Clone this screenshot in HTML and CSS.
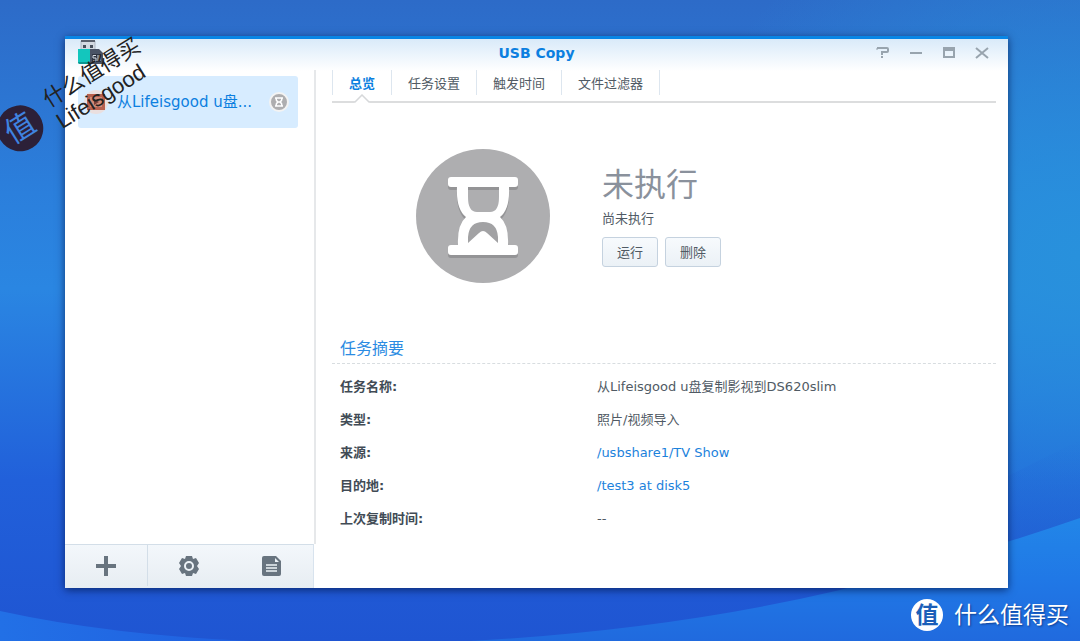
FILE: index.html
```html
<!DOCTYPE html>
<html lang="zh-CN">
<head>
<meta charset="utf-8">
<title>USB Copy</title>
<link rel="stylesheet" href="styles.css">
</head>
<body>
<div class="desktop">
  <svg class="wallpaper" viewBox="0 0 1080 641" preserveAspectRatio="none" aria-hidden="true">
    <defs>
      <linearGradient id="wave-left" x1="0" y1="0" x2="1" y2="0">
        <stop offset="0" stop-color="#2270e6"/>
        <stop offset="1" stop-color="#2060e0"/>
      </linearGradient>
      <linearGradient id="wave-right" x1="0" y1="0" x2="0" y2="1">
        <stop offset="0" stop-color="#2286e8"/>
        <stop offset="0.5" stop-color="#2078e6"/>
        <stop offset="1" stop-color="#206ade"/>
      </linearGradient>
      <linearGradient id="wave-shade" x1="0" y1="0" x2="0" y2="1">
        <stop offset="0" stop-color="#2268d6" stop-opacity="0"/>
        <stop offset="1" stop-color="#2058d2"/>
      </linearGradient>
    </defs>
    <path d="M840 560L1080 440V530L840 600Z" fill="url(#wave-shade)"/>
    <path d="M0 611Q110 635 250 641H0Z" fill="url(#wave-left)"/>
    <path d="M470 641Q670 630 840 590Q970 556 1080 518V641Z" fill="url(#wave-right)"/>
  </svg>

  <main class="window">
    <header class="titlebar">
      <svg class="app-icon" viewBox="0 0 32 26" aria-hidden="true">
        <path d="M3 1h14v10H3z" fill="#d3dae2" stroke="#aeb8c4"/>
        <path d="M3 0h14v2H3z" fill="#59616e"/>
        <path d="M5 5h3v3H5zM12 5h3v3h-3z" fill="#47505c"/>
        <path d="M0 9h12v15H2q-2 0-2-2z" fill="#13c6bd"/>
        <path d="M12 9h9l4 4v11H12z" fill="#4a5365"/>
        <path d="M0 22h12v2H2q-2 0-2-2z" fill="#0b9790"/>
        <path d="M14 14h9v8h-9z" fill="#2e3442"/>
        <path d="M18 15.500h-3v2.500h3v3h-3M20 15v6M22 15v6" fill="none" stroke="#d9dfe8"/>
      </svg>
      <h1 class="title">USB Copy</h1>
      <div class="controls">
        <button class="control" aria-label="帮助"><svg viewBox="0 0 14 14"><path d="M1 2h10q1 0 1 1v2q0 1-1 1H6v3M6 10v2" fill="none" stroke="currentColor" stroke-width="2"/><path d="M1 2v2" stroke="currentColor"/></svg></button>
        <button class="control" aria-label="最小化"><svg viewBox="0 0 14 14"><path d="M1 7h12" stroke="currentColor" stroke-width="2"/></svg></button>
        <button class="control" aria-label="最大化"><svg viewBox="0 0 14 14"><path d="M2 2v9h10V2z" fill="none" stroke="currentColor" stroke-width="2"/><path d="M1 1h12v4H1z" fill="currentColor"/></svg></button>
        <button class="control" aria-label="关闭"><svg viewBox="0 0 14 14"><path d="M1 2l12 10M13 2L1 12" stroke="currentColor" stroke-width="2"/></svg></button>
      </div>
    </header>

    <div class="body">
      <aside class="sidebar">
        <div class="tasks">
          <button class="task">
            <svg class="task-icon" viewBox="0 0 24 24" aria-hidden="true"><circle cx="12" cy="12" r="12" fill="#eadfdf"/><path d="M3 4h18v16H3z" fill="#b8614f"/><path d="M6 7h12v10H6z" fill="#cf8b79"/><path d="M10 9l5 3-5 3z" fill="#7c4038"/></svg>
            <span class="task-name">从Lifeisgood u盘...</span>
            <svg class="task-state" viewBox="0 0 20 20" aria-hidden="true"><circle cx="10" cy="10" r="9" fill="#aeaeb0" stroke="#f3f3f3" stroke-width="2"/><path d="M6 6h8M6 14h8M7 6q0 3 2 4-2 1-2 4M13 6q0 3-2 4 2 1 2 4" fill="none" stroke="#fff" stroke-width="1.5"/></svg>
          </button>
        </div>
        <div class="toolbar">
          <button class="tool" aria-label="新增"><svg viewBox="0 0 22 22"><path d="M11 1v20M1 11h20" stroke="currentColor" stroke-width="4"/></svg></button>
          <button class="tool" aria-label="设置"><svg viewBox="0 0 22 22"><path d="M8 1h6l1 3 3-1 3 5-2 3 2 3-3 5-3-1-1 3H8l-1-3-3 1-3-5 2-3-2-3 3-5 3 1z" fill="currentColor"/><circle cx="11" cy="11" r="4" fill="none" stroke="#edf3f8" stroke-width="2"/></svg></button>
          <button class="tool" aria-label="日志"><svg viewBox="0 0 22 22"><path d="M3 1h12l5 5v13q0 2-2 2H3q-2 0-2-2V3q0-2 2-2z" fill="currentColor"/><path d="M14 3v4h4z" fill="#edf3f8"/><path d="M5 10h11M5 13h11M5 16h11" fill="none" stroke="#edf3f8" stroke-width="1.5"/></svg></button>
        </div>
      </aside>

      <section class="content">
        <nav class="tabs">
          <button class="tab tab-active">总览<svg class="tab-notch" viewBox="0 0 16 9" aria-hidden="true"><path d="M0 8L8 1l8 7v1H0z" fill="#fff"/><path d="M0 8h1l7-7 7 7h1" fill="none" stroke="#d6d8da" stroke-width="1.5"/></svg></button>
          <button class="tab">任务设置</button>
          <button class="tab">触发时间</button>
          <button class="tab">文件过滤器</button>
        </nav>

        <div class="status">
          <svg class="status-icon" viewBox="0 0 134 134" aria-hidden="true">
            <circle cx="67" cy="67" r="67" fill="#aeaeb0"/>
            <path fill="#949496" transform="translate(0 3)" d="M35 28h64q3 0 3 3v4q0 3-3 3h-6q1 22-9 30 9 8 8 28h7q3 0 3 3v4q0 3-3 3H35q-3 0-3-3v-4q0-3 3-3h7q-1-20 8-28-10-8-9-30h-6q-3 0-3-3v-4q0-3 3-3z"/>
            <path d="M35 28h64q3 0 3 3v4q0 3-3 3h-6q1 22-9 30 9 8 8 28h7q3 0 3 3v4q0 3-3 3H35q-3 0-3-3v-4q0-3 3-3h7q-1-20 8-28-10-8-9-30h-6q-3 0-3-3v-4q0-3 3-3z" fill="#fff"/>
            <path d="M52 38h31v10q0 15-9 15H61q-9 0-9-15z" fill="#aeaeb0"/>
            <path d="M52 38h31v3H52z" fill="#949496"/>
            <path d="M52 94V88q1-15 15-15t15 15v6L71 84q-4-4-8 0z" fill="#a2a2a4"/>
          </svg>
          <div class="status-text">
            <h2 class="status-title">未执行</h2>
            <p class="status-note">尚未执行</p>
            <div class="actions">
              <button class="action">运行</button>
              <button class="action">删除</button>
            </div>
          </div>
        </div>

        <h3 class="summary-title">任务摘要</h3>
        <dl class="summary">
          <dt>任务名称:</dt><dd>从Lifeisgood u盘复制影视到DS620slim</dd>
          <dt>类型:</dt><dd>照片/视频导入</dd>
          <dt>来源:</dt><dd><a href="#">/usbshare1/TV Show</a></dd>
          <dt>目的地:</dt><dd><a href="#">/test3 at disk5</a></dd>
          <dt>上次复制时间:</dt><dd>--</dd>
        </dl>
      </section>
    </div>
  </main>

  <div class="stamp"><span class="stamp-seal">值</span><span class="stamp-text">什么值得买<br>Lifeisgood</span></div>
  <div class="brand"><span class="brand-seal">值</span><span>什么值得买</span></div>
</div>
</body>
</html>
```

FILE: styles.css
```css
* { box-sizing: border-box; }

body {
  margin: 0;
  font: 13px/20px Verdana, "DejaVu Sans", "Noto Sans CJK SC", sans-serif;
  color: #505a64;
}

h1, h2, h3, p, dl, dd { margin: 0; font-weight: normal; }

button {
  margin: 0;
  padding: 0;
  border: 0;
  background: none;
  color: inherit;
  font: inherit;
}

svg { display: block; }

.desktop {
  position: relative;
  display: flex;
  min-height: 100vh;
  padding: 36px 72px 53px 65px;
  overflow: hidden;
  background:
    radial-gradient(ellipse 420px 380px at 100% 40%, #2891dc, transparent),
    linear-gradient(#2d6bc8, #2b7fdc 30%, #2a86e2 45%, #2160da 75%, #1f55d2);
}

.wallpaper { position: absolute; inset: 0; width: 100%; height: 100%; }

.window {
  position: relative;
  flex: 1;
  display: flex;
  flex-direction: column;
  border-top: 3px solid #0886e6;
  background: linear-gradient(#d9eaf9, #fff 32px);
  box-shadow: 0 2px 8px rgba(0, 20, 70, .7);
}

.titlebar {
  display: grid;
  grid-template-columns: 1fr auto 1fr;
  align-items: center;
  height: 31px;
  padding: 0 19px 4px 13px;
}

.app-icon { width: 32px; height: 26px; }
.title { padding-left: 6px; color: #0c7fe0; font-size: 14px; font-weight: bold; }
.controls { display: flex; justify-content: flex-end; gap: 19px; color: #98a4ae; }
.control svg { width: 14px; height: 14px; }

.body { flex: 1; display: flex; }

.sidebar { display: flex; flex-direction: column; width: 251px; }
.tasks { flex: 1; padding: 6px 16px 0 13px; border-right: 2px solid #e6e8ea; }

.task {
  display: flex;
  align-items: center;
  width: 100%;
  height: 52px;
  padding: 0 9px 0 6px;
  border-radius: 3px;
  background: #d7ecff;
  color: #0c7fe0;
  font-size: 15px;
  text-align: left;
}

.task-icon { flex: none; width: 24px; height: 24px; }
.task-name { flex: 1; margin: 0 8px 0 9px; white-space: nowrap; }
.task-state { flex: none; width: 20px; height: 20px; }

.toolbar {
  display: flex;
  width: 249px;
  height: 44px;
  padding-bottom: 2px;
  border-top: 1px solid #d3dee8;
  border-right: 1px solid #d8e3ee;
  background: linear-gradient(#f3f7fb, #e7edf2);
  color: #68747f;
}

.tool { flex: 1; display: grid; place-items: center; }
.tool:first-child { border-right: 1px solid #d3dee8; }
.tool svg { width: 22px; height: 22px; }

.content { flex: 1; padding: 0 12px 0 16px; }

.tabs {
  display: flex;
  height: 33px;
  padding-bottom: 6px;
  border-bottom: 2px solid #dcddde;
}

.tab { position: relative; padding: 2px 16px 0; border-right: 1px solid #dde6ef; }
.tab:first-child { border-left: 1px solid #dde6ef; }
.tab-active { color: #0c7fe0; font-weight: bold; }
.tab-notch { position: absolute; bottom: -8px; left: 50%; width: 16px; height: 9px; margin-left: -8px; }

.status { display: flex; gap: 52px; padding: 46px 0 0 84px; }
.status-icon { width: 134px; height: 134px; }
.status-text { padding-top: 14px; }
.status-title { color: #8a919c; font-size: 32px; line-height: 44px; }
.status-note { line-height: 24px; }
.actions { display: flex; gap: 7px; margin-top: 6px; }

.action {
  width: 56px;
  height: 30px;
  padding-top: 2px;
  border: 1px solid #c5d2df;
  border-radius: 3px;
  background: linear-gradient(#f7fafd, #ebf1f6);
}

.summary-title {
  margin-top: 54px;
  padding: 0 8px 2px;
  border-bottom: 1px dashed #d8dde0;
  color: #2b8be2;
  font-size: 16px;
  line-height: 24px;
}

.summary {
  display: grid;
  grid-template-columns: 257px 1fr;
  row-gap: 13px;
  padding: 13px 8px 0;
}

.summary dt { font-weight: bold; color: #414b55; }
.summary a { color: #1c82dc; text-decoration: none; }

.stamp {
  position: absolute;
  left: -12px;
  top: 68px;
  display: flex;
  align-items: center;
  gap: 12px;
  color: #222;
  transform: rotate(-32deg);
}

.stamp-seal, .brand-seal { display: grid; place-items: center; border-radius: 50%; font-weight: bold; }
.stamp-seal { width: 46px; height: 46px; background: #2c2038; color: #3f83e0; font-size: 30px; font-weight: normal; }
.stamp-text { padding-top: 6px; font: 22px/25px "Liberation Sans", "Noto Sans CJK SC", sans-serif; white-space: nowrap; }

.brand {
  position: absolute;
  right: 11px;
  bottom: 10px;
  display: flex;
  align-items: center;
  gap: 11px;
  color: #fff;
  font-size: 23px;
  line-height: 32px;
  text-shadow: 1px 1px 2px #0b3d91;
}

.brand-seal { width: 32px; height: 32px; background: #fff; color: #1b5fb8; text-shadow: none; }
```
